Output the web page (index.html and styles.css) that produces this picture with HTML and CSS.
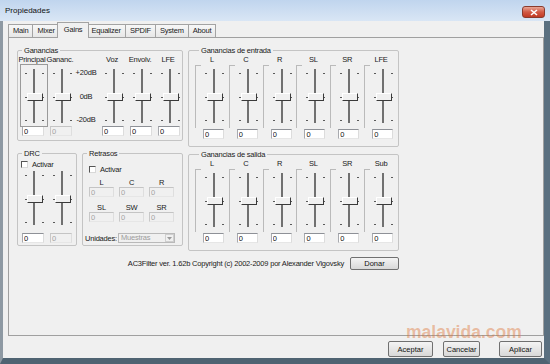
FILE: index.html
```html
<!DOCTYPE html>
<html>
<head>
<meta charset="utf-8">
<link rel="stylesheet" href="styles.css">
</head>
<body>
<div class="window">
  <div class="titlebar">
    <span class="title">Propiedades</span>
    <span class="close"><svg width="10" height="7" viewBox="0 0 10 7"><path d="M2 1 L8 6 M8 1 L2 6" stroke="#fff" stroke-width="1.6"/></svg></span>
  </div>
  <div class="client">
    <div class="tabs">
      <span class="tab">Main</span>
      <span class="tab">Mixer</span>
      <span class="tab active">Gains</span>
      <span class="tab">Equalizer</span>
      <span class="tab">SPDIF</span>
      <span class="tab">System</span>
      <span class="tab">About</span>
    </div>
    <div class="panel">
      <div class="groups">
        <div class="leftcol">
          <!-- ganancias principales -->
          <fieldset class="grp gan">
            <legend>Ganancias</legend>
            <div class="cols">
              <div class="col">
                <div class="lbl">Principal</div>
                <div class="slider focus"></div>
                <input class="edit" type="text" value="0">
              </div>
              <div class="col">
                <div class="lbl">Gananc.</div>
                <div class="slider"></div>
                <input class="edit" type="text" value="0" disabled>
              </div>
              <div class="scale">
                <div class="db">+20dB</div>
                <div class="db mid">0dB</div>
                <div class="db low">-20dB</div>
              </div>
              <div class="col">
                <div class="lbl">Voz</div>
                <div class="slider"></div>
                <input class="edit" type="text" value="0">
              </div>
              <div class="col">
                <div class="lbl">Envolv.</div>
                <div class="slider"></div>
                <input class="edit" type="text" value="0">
              </div>
              <div class="col">
                <div class="lbl">LFE</div>
                <div class="slider"></div>
                <input class="edit" type="text" value="0">
              </div>
            </div>
          </fieldset>
          <div class="row2">
            <fieldset class="grp drc">
              <legend>DRC</legend>
              <label class="chk-row"><input class="chk" type="checkbox">Activar</label>
              <div class="cols">
                <div class="col">
                  <div class="slider"></div>
                  <input class="edit" type="text" value="0">
                </div>
                <div class="col">
                  <div class="slider"></div>
                  <input class="edit" type="text" value="0" disabled>
                </div>
              </div>
            </fieldset>
            <fieldset class="grp ret">
              <legend>Retrasos</legend>
              <label class="chk-row"><input class="chk" type="checkbox">Activar</label>
              <div class="rgrid">
                <div class="lbl">L</div><div class="lbl">C</div><div class="lbl">R</div>
                <input class="edit" type="text" value="0" disabled>
                <input class="edit" type="text" value="0" disabled>
                <input class="edit" type="text" value="0" disabled>
              </div>
              <div class="rgrid second">
                <div class="lbl">SL</div><div class="lbl">SW</div><div class="lbl">SR</div>
                <input class="edit" type="text" value="0" disabled>
                <input class="edit" type="text" value="0" disabled>
                <input class="edit" type="text" value="0" disabled>
              </div>
              <div class="units">
                <span class="ulbl">Unidades:</span>
                <div class="combo">
                  <span class="combo-txt">Muestras</span>
                  <span class="combo-btn"><svg width="5" height="3" viewBox="0 0 5 3"><path d="M0 0 H5 L2.5 3 Z" fill="#9a9a9a"/></svg></span>
                </div>
              </div>
            </fieldset>
          </div>
        </div>
        <div class="rightcol">
          <fieldset class="grp io">
            <legend>Ganancias de entrada</legend>
            <div class="bcols">
              <div class="bcol"><div class="lbl">L</div><div class="bracket"><div class="slider"></div></div><input class="edit" type="text" value="0"></div>
              <div class="bcol"><div class="lbl">C</div><div class="bracket"><div class="slider"></div></div><input class="edit" type="text" value="0"></div>
              <div class="bcol"><div class="lbl">R</div><div class="bracket"><div class="slider"></div></div><input class="edit" type="text" value="0"></div>
              <div class="bcol"><div class="lbl">SL</div><div class="bracket"><div class="slider"></div></div><input class="edit" type="text" value="0"></div>
              <div class="bcol"><div class="lbl">SR</div><div class="bracket"><div class="slider"></div></div><input class="edit" type="text" value="0"></div>
              <div class="bcol"><div class="lbl">LFE</div><div class="bracket"><div class="slider"></div></div><input class="edit" type="text" value="0"></div>
            </div>
          </fieldset>
          <fieldset class="grp io salida">
            <legend>Ganancias de salida</legend>
            <div class="bcols">
              <div class="bcol"><div class="lbl">L</div><div class="bracket"><div class="slider"></div></div><input class="edit" type="text" value="0"></div>
              <div class="bcol"><div class="lbl">C</div><div class="bracket"><div class="slider"></div></div><input class="edit" type="text" value="0"></div>
              <div class="bcol"><div class="lbl">R</div><div class="bracket"><div class="slider"></div></div><input class="edit" type="text" value="0"></div>
              <div class="bcol"><div class="lbl">SL</div><div class="bracket"><div class="slider"></div></div><input class="edit" type="text" value="0"></div>
              <div class="bcol"><div class="lbl">SR</div><div class="bracket"><div class="slider"></div></div><input class="edit" type="text" value="0"></div>
              <div class="bcol"><div class="lbl">Sub</div><div class="bracket"><div class="slider"></div></div><input class="edit" type="text" value="0"></div>
            </div>
          </fieldset>
        </div>
      </div>
      <div class="footer">
        <span class="copy">AC3Filter ver. 1.62b Copyright (c) 2002-2009 por Alexander Vigovsky</span>
        <button class="btn donar">Donar</button>
      </div>
    </div>
    <div class="actions">
      <button class="btn aceptar">Aceptar</button>
      <button class="btn cancelar">Cancelar</button>
      <button class="btn aplicar">Aplicar</button>
    </div>
  </div>
  <div class="wm">malavida.com</div>
</div>
</body>
</html>
```

FILE: styles.css
```css
* {
	box-sizing: border-box;
}
body {
	margin: 0;
	background: #fff;
}
.window {
	position: relative;
	width: 550px;
	height: 364px;
	display: flex;
	flex-direction: column;
	overflow: hidden;
	font-family: "Liberation Sans", Arial, sans-serif;
	font-size: 7.5px;
	letter-spacing: -0.2px;
	color: #1a1a1a;
}

/* barra de titulo */
.titlebar {
	height: 21px;
	flex: none;
	display: flex;
	justify-content: space-between;
	padding: 0 5px;
	background: linear-gradient(#c0d5ee, #d9e6f5);
}
.title {
	font-size: 8px;
	letter-spacing: 0;
	line-height: 21px;
	color: #111;
}
.close {
	width: 23px;
	height: 12px;
	margin-top: 6px;
	display: flex;
	align-items: center;
	justify-content: center;
	border: 1px solid #8a3b2d;
	border-radius: 3px;
	background: linear-gradient(#e8a595, #d25a45 50%, #c13a24);
}

.client {
	flex: 1;
	display: flex;
	flex-direction: column;
	background: #f0f0f0;
	border-left: 3px solid #8e99a3;
	border-right: 6px solid #5b7080;
	border-bottom: 6px solid #4f6372;
	padding: 3px 0 1px 5px;
}

/* pestañas */
.tabs {
	display: flex;
	align-items: flex-end;
	height: 13px;
	position: relative;
	z-index: 1;
}
.tab {
	height: 13px;
	padding: 0 4px;
	margin-left: -1px;
	border: 1px solid #a3a3a3;
	border-bottom: none;
	line-height: 11px;
	background: linear-gradient(#f7f7f7, #e7e7e7);
}
.tab:first-child {
	margin-left: 0;
}
.tab.active {
	height: 16px;
	margin: 0 -2px -1px -3px;
	padding: 0 6px;
	line-height: 13px;
	background: #f0f0f0;
	position: relative;
}

.panel {
	width: 536px;
	height: 299px;
	border: 1px solid #a0a0a0;
	padding: 8px 0 0 8px;
}
.groups {
	display: flex;
	gap: 5px;
}
.leftcol {
	width: 166px;
}
.rightcol {
	width: 211px;
}

.grp {
	margin: 0;
	padding: 0;
	min-width: 0;
	border: 1px solid #c4c4c4;
	border-radius: 2px;
}
legend {
	padding: 0 2px;
	margin-left: 4px;
	line-height: 9px;
}
.lbl {
	height: 9px;
	line-height: 9px;
	text-align: center;
	white-space: nowrap;
}

/* slider vertical */
.slider {
	position: relative;
	width: 22px;
	height: 57px;
	background:
		linear-gradient(#5a5a5a, #5a5a5a) 2px 6px / 2px 1px no-repeat,
		linear-gradient(#5a5a5a, #5a5a5a) 19px 6px / 2px 1px no-repeat,
		linear-gradient(#5a5a5a, #5a5a5a) 2px 30px / 2px 1px no-repeat,
		linear-gradient(#5a5a5a, #5a5a5a) 19px 30px / 2px 1px no-repeat,
		linear-gradient(#5a5a5a, #5a5a5a) 2px 53px / 2px 1px no-repeat,
		linear-gradient(#5a5a5a, #5a5a5a) 19px 53px / 2px 1px no-repeat;
}
.slider::before {
	content: "";
	position: absolute;
	left: 10px;
	top: 2px;
	width: 2px;
	height: 54px;
	background: #707070;
}
.slider::after {
	content: "";
	position: absolute;
	left: 4px;
	top: 26px;
	width: 14px;
	height: 6px;
	background: #f0f0f0;
	border-top: 1px solid #fff;
	border-left: 1px solid #fff;
	border-right: 1px solid #3a3a3a;
	border-bottom: 1px solid #3a3a3a;
}
.slider.focus {
	outline: 1px solid #9a9a9a;
	outline-offset: 2px;
}

.edit {
	display: block;
	width: 22px;
	height: 10px;
	margin: 0;
	padding: 0 1px;
	font: inherit;
	line-height: 8px;
	color: #111;
	background: #fff;
	border: 1px solid;
	border-color: #8e9197 #dcdcdc #e6e6e6 #a8aaaf;
	outline: none;
}
.edit:disabled {
	background: #f0f0f0;
	color: #a3a3a3;
	border-color: #c4c4c4 #dedede #e6e6e6 #c8c8c8;
}

/* Ganancias */
.cols {
	display: flex;
}
.col {
	width: 28px;
}
.col .slider {
	margin: 3px 0 0 5px;
}
.col .edit {
	margin: 2px 0 0 4px;
}
.gan {
	padding-bottom: 4px;
}
.scale {
	width: 24px;
	padding-top: 13px;
	text-align: center;
}
.db {
	line-height: 9px;
}
.db.mid {
	margin-top: 15px;
}
.db.low {
	margin-top: 14px;
}

/* DRC / Retrasos */
.row2 {
	display: flex;
	justify-content: space-between;
	margin-top: 8px;
}
.chk-row {
	display: flex;
	align-items: center;
	gap: 4px;
	height: 9px;
}
.chk {
	appearance: none;
	width: 7px;
	height: 7px;
	margin: 0;
	background: #fff;
	border: 1px solid;
	border-color: #555 #d8d8d8 #d8d8d8 #555;
}
.drc {
	width: 60px;
	padding-bottom: 2px;
}
.drc .chk-row {
	margin: 2px 0 0 3px;
}
.drc .col .slider {
	margin-top: 0;
}
.drc .col .edit {
	margin-top: 7px;
}
.ret {
	width: 101px;
	padding-bottom: 2px;
}
.ret .chk-row {
	margin: 7px 0 0 6px;
}
.rgrid {
	display: grid;
	grid-template-columns: repeat(3, 25px);
	column-gap: 5px;
	margin: 4px 0 0 6px;
}
.rgrid.second {
	margin-top: 6px;
}
.rgrid .edit {
	width: 25px;
}
.units {
	display: flex;
	align-items: center;
	height: 10px;
	margin: 11px 0 0 2px;
}
.ulbl {
	width: 33px;
	white-space: nowrap;
}
.combo {
	width: 57px;
	height: 10px;
	display: flex;
	align-items: center;
	padding-left: 2px;
	border: 1px solid #b9b9b9;
	background: #f0f0f0;
	color: #9c9c9c;
	line-height: 8px;
}
.combo-txt {
	flex: 1;
}
.combo-btn {
	width: 9px;
	height: 8px;
	display: flex;
	align-items: center;
	justify-content: center;
	border: 1px solid #cfcfcf;
}

/* entrada / salida */
.io {
	padding: 0 0 7px 6px;
}
.salida {
	margin-top: 3px;
}
.bcols {
	display: flex;
}
.bcol {
	flex: 1;
}
.bracket {
	position: relative;
	margin-top: 1px;
	padding: 2px 0 4px 7px;
	border-left: 1px solid #bababa;
}
.bracket::before {
	content: "";
	position: absolute;
	left: 0;
	top: 0;
	width: 5px;
	height: 1px;
	background: #bababa;
}
.bcol .edit {
	width: 21px;
	margin: 1px 0 0 8px;
}

/* pie */
.footer {
	width: 382px;
	margin-top: 6px;
	display: flex;
	justify-content: flex-end;
	align-items: center;
	gap: 6px;
}
.btn {
	height: 13px;
	padding: 0;
	font: inherit;
	color: #111;
	border: 1px solid #707070;
	border-radius: 2px;
	background: linear-gradient(#f4f4f4, #e6e6e6 50%, #d8d8d8);
}
.donar {
	width: 49px;
}
.actions {
	display: flex;
	justify-content: flex-end;
	margin-top: 5px;
	padding-right: 2px;
}
.actions .btn {
	height: 16px;
}
.aceptar {
	width: 45px;
}
.cancelar {
	width: 37px;
	margin-left: 10px;
}
.aplicar {
	width: 43px;
	margin-left: 19px;
}

.wm {
	position: absolute;
	left: 406px;
	top: 322px;
	font-weight: bold;
	font-size: 17.5px;
	letter-spacing: 0;
	color: rgba(222, 120, 60, 0.45);
}
```
